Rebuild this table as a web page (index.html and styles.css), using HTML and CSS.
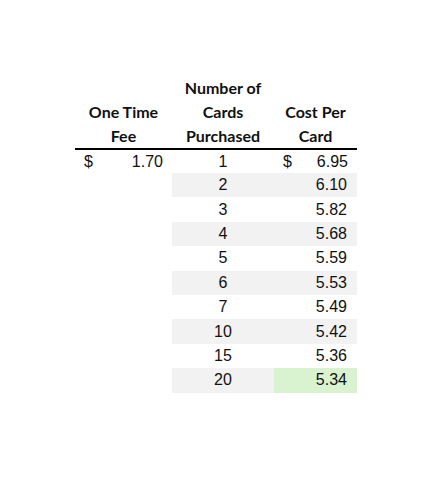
FILE: index.html
```html
<!DOCTYPE html>
<html>
<head>
<meta charset="utf-8">
<link rel="stylesheet" href="styles.css">
</head>
<body>
<div class="page">
  <div class="sheet">
    <div class="hd c1"><span>One Time</span><span>Fee</span></div>
    <div class="hd c2"><span>Number of</span><span>Cards</span><span>Purchased</span></div>
    <div class="hd c3"><span>Cost Per</span><span>Card</span></div>

    <div class="cell money"><span>$</span><span>1.70</span></div>
    <div class="cell num">1</div>
    <div class="cell money"><span>$</span><span>6.95</span></div>

    <div class="cell"></div><div class="cell num band">2</div><div class="cell right band">6.10</div>
    <div class="cell"></div><div class="cell num">3</div><div class="cell right">5.82</div>
    <div class="cell"></div><div class="cell num band">4</div><div class="cell right band">5.68</div>
    <div class="cell"></div><div class="cell num">5</div><div class="cell right">5.59</div>
    <div class="cell"></div><div class="cell num band">6</div><div class="cell right band">5.53</div>
    <div class="cell"></div><div class="cell num">7</div><div class="cell right">5.49</div>
    <div class="cell"></div><div class="cell num band">10</div><div class="cell right band">5.42</div>
    <div class="cell"></div><div class="cell num">15</div><div class="cell right">5.36</div>
    <div class="cell"></div><div class="cell num band">20</div><div class="cell right best">5.34</div>
  </div>
</div>
</body>
</html>
```
FILE: styles.css
```css
html, body {
  margin: 0;
  padding: 0;
  background: #fff;
}
.page {
  padding: 76px 0 0 75px;
}
.sheet {
  display: grid;
  grid-template-columns: 97px 102px 83px;
  grid-template-rows: 72px 2px 23px repeat(9, 24.4px);
  width: 282px;
  font-family: "Liberation Sans", Arial, sans-serif;
  font-size: 16px;
  color: #111;
}
.hd {
  display: flex;
  flex-direction: column;
  justify-content: flex-end;
  align-items: center;
  font-family: Lato, "Open Sans", sans-serif;
  font-weight: 700;
  font-size: 16px;
  line-height: 24px;
  color: #111;
  border-bottom: 2px solid #000;
  grid-row: 1 / span 2;
}
.cell {
  display: flex;
  align-items: center;
  line-height: 1;
}
.num {
  justify-content: center;
}
.right {
  justify-content: flex-end;
  padding-right: 10px;
}
.money {
  justify-content: space-between;
  padding: 0 9px 0 9px;
}
.band {
  background: #f2f2f2;
}
.best {
  background: #d9f2d0;
}
```
